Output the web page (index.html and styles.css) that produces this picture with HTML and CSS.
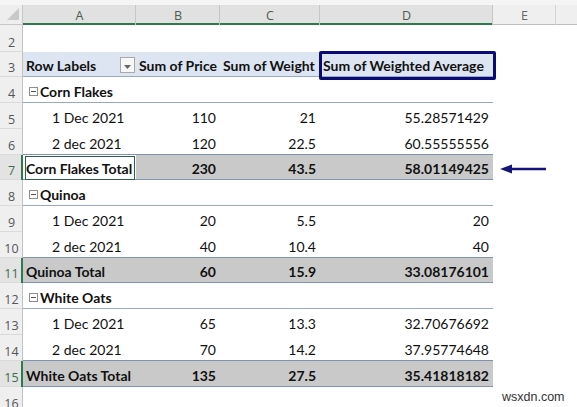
FILE: index.html
```html
<!DOCTYPE html>
<html>
<head>
<meta charset="utf-8">
<link rel="stylesheet" href="styles.css">
</head>
<body>
<div class="sheet">
  <div class="topstrip"></div>
  <div class="row colhead">
    <div class="corner"><svg width="14" height="14" viewBox="0 0 14 14"><polygon points="13,1 13,13 1,13" fill="#c9c9c9"/></svg></div>
    <div class="ch sel">A</div>
    <div class="ch sel">B</div>
    <div class="ch sel">C</div>
    <div class="ch sel">D</div>
    <div class="ch">E</div>
    <div class="ch last"></div>
  </div>

  <div class="row r27">
    <div class="rh">2</div><div class="c"></div><div class="c"></div><div class="c"></div><div class="c"></div><div class="c"></div><div class="c"></div>
  </div>

  <div class="row r25">
    <div class="rh">3</div>
    <div class="c hd b bl">Row Labels<span class="dd"><svg width="7" height="4" viewBox="0 0 7 4"><polygon points="0,0 7,0 3.5,4" fill="#666"/></svg></span></div>
    <div class="c hd b bl">Sum of Price</div>
    <div class="c hd b bl">Sum of Weight</div>
    <div class="c hd b bl dsel">Sum of Weighted Average</div>
    <div class="c"></div><div class="c"></div>
  </div>

  <div class="row">
    <div class="rh">4</div>
    <div class="c b bl grp"><span class="mb"></span>Corn Flakes</div>
    <div class="c bl"></div><div class="c bl"></div><div class="c bl"></div>
    <div class="c"></div><div class="c"></div>
  </div>
  <div class="row">
    <div class="rh">5</div>
    <div class="c it">1 Dec 2021</div><div class="c n">110</div><div class="c n">21</div><div class="c n">55.28571429</div>
    <div class="c"></div><div class="c"></div>
  </div>
  <div class="row">
    <div class="rh">6</div>
    <div class="c it bt">2 dec 2021</div><div class="c n bt">120</div><div class="c n bt">22.5</div><div class="c n bt">60.55555556</div>
    <div class="c"></div><div class="c"></div>
  </div>
  <div class="row r25">
    <div class="rh rsel">7</div>
    <div class="c tot b act">Corn Flakes Total</div><div class="c tot b n">230</div><div class="c tot b n">43.5</div><div class="c tot b n">58.01149425</div>
    <div class="c"></div><div class="c"></div>
  </div>
  <div class="row">
    <div class="rh">8</div>
    <div class="c b bl grp"><span class="mb"></span>Quinoa</div>
    <div class="c bl"></div><div class="c bl"></div><div class="c bl"></div>
    <div class="c"></div><div class="c"></div>
  </div>
  <div class="row">
    <div class="rh">9</div>
    <div class="c it">1 Dec 2021</div><div class="c n">20</div><div class="c n">5.5</div><div class="c n">20</div>
    <div class="c"></div><div class="c"></div>
  </div>
  <div class="row">
    <div class="rh">10</div>
    <div class="c it bt">2 dec 2021</div><div class="c n bt">40</div><div class="c n bt">10.4</div><div class="c n bt">40</div>
    <div class="c"></div><div class="c"></div>
  </div>
  <div class="row r25">
    <div class="rh rsel">11</div>
    <div class="c tot b">Quinoa Total</div><div class="c tot b n">60</div><div class="c tot b n">15.9</div><div class="c tot b n">33.08176101</div>
    <div class="c"></div><div class="c"></div>
  </div>
  <div class="row">
    <div class="rh">12</div>
    <div class="c b bl grp"><span class="mb"></span>White Oats</div>
    <div class="c bl"></div><div class="c bl"></div><div class="c bl"></div>
    <div class="c"></div><div class="c"></div>
  </div>
  <div class="row">
    <div class="rh">13</div>
    <div class="c it">1 Dec 2021</div><div class="c n">65</div><div class="c n">13.3</div><div class="c n">32.70676692</div>
    <div class="c"></div><div class="c"></div>
  </div>
  <div class="row">
    <div class="rh">14</div>
    <div class="c it bt">2 dec 2021</div><div class="c n bt">70</div><div class="c n bt">14.2</div><div class="c n bt">37.95774648</div>
    <div class="c"></div><div class="c"></div>
  </div>
  <div class="row">
    <div class="rh rsel">15</div>
    <div class="c tot b">White Oats Total</div><div class="c tot b n">135</div><div class="c tot b n">27.5</div><div class="c tot b n">35.41818182</div>
    <div class="c"></div><div class="c"></div>
  </div>
  <div class="row">
    <div class="rh">16</div>
    <div class="c"></div><div class="c"></div><div class="c"></div><div class="c"></div><div class="c"></div><div class="c"></div>
  </div>

  <svg class="arrow" width="48" height="12" viewBox="0 0 48 12"><polygon points="0,6 12,1.5 12,4.7 46,4.7 46,7.3 12,7.3 12,10.5" fill="#14147a"/></svg>
  <div class="wm">wsxdn.com</div>
</div>
</body>
</html>
```

FILE: styles.css
```css
* { box-sizing: border-box; }
html, body { margin: 0; padding: 0; background: #fff; }
body { width: 577px; height: 407px; overflow: hidden; font-family: Lato, "Noto Sans", sans-serif; font-size: 14px; color: #111; }

.sheet { position: relative; width: 577px; height: 407px; overflow: hidden; }
.topstrip { height: 5px; background: #f5f5f5; }

.row { display: grid; grid-template-columns: 23px 113px 84px 100px 173px 63px 1fr; height: 26px; }
.r25 { height: 25px; }
.r27 { height: 27px; }

.colhead { height: 20px; }
.corner { background: #eeeeee; display: flex; align-items: flex-start; justify-content: flex-end; padding: 2px 3px 0 0; box-shadow: inset -1px -1px 0 #c8c8c8; }
.ch { background: #efefef; color: #666; font-family: "Open Sans", sans-serif; font-size: 12.5px; display: flex; align-items: center; justify-content: center; box-shadow: inset -1px 0 0 #d4d4d4, inset 0 -1px 0 #bdbdbd; }
.ch.sel { background: #e1e1e1; color: #4d5a50; box-shadow: inset -1px 0 0 #c6c6c6, inset 0 -2px 0 #2c7a4d; }
.ch.last { box-shadow: inset 0 -1px 0 #bdbdbd; }

.rh { background: #efefef; color: #555; font-family: "Open Sans", sans-serif; font-size: 12.5px; display: flex; align-items: flex-end; justify-content: center; padding-bottom: 1px; box-shadow: inset -1px 0 0 #c3c3c3, inset 0 -1px 0 #dadada; }
.rh.rsel { background: #e3e3e3; color: #3d6b4c; box-shadow: inset -2px 0 0 #2c7a4d, inset 0 -1px 0 #dadada; }

.c { position: relative; display: flex; align-items: flex-end; padding: 0 4px 3px 3px; white-space: nowrap; }
.b { font-weight: 700; }
.hd { background: #dde5f2; }
.bl { box-shadow: inset 0 -1px 0 #97aac4; }
.bt { box-shadow: inset 0 -1px 0 #7f94b0; }
.tot { background: #c9c9c9; box-shadow: inset 0 -1px 0 #7f94b0; }
.n { justify-content: flex-end; }
.it { padding-left: 29px; }
.grp { padding-left: 6px; }

.hd .dd { position: absolute; left: 97px; top: 5px; width: 15px; height: 16px; background: #f7f7f7; border: 1px solid #a9a9a9; display: flex; align-items: center; justify-content: center; padding-top: 3px; }

.mb { width: 9px; height: 9px; border: 1px solid #8d8d8d; background: #fff; margin: 0 2px 4px 0; position: relative; flex: none; }
.mb::after { content: ""; position: absolute; left: 1px; right: 1px; top: 3px; height: 1px; background: #555; }

.dsel::after { content: ""; position: absolute; left: -1px; right: -3px; top: -1px; bottom: -3px; border: 3px solid #0b0b78; border-radius: 2px; }

.act { background: #fff; }
.act::after { content: ""; position: absolute; left: 2px; right: 1px; top: 1px; bottom: 0; border: 1px solid #2f5f48; }

.arrow { position: absolute; left: 500px; top: 163px; }
.wm { position: absolute; left: 502px; top: 390px; font-family: "Liberation Sans", Arial, sans-serif; font-size: 12.5px; color: #333; }
```
